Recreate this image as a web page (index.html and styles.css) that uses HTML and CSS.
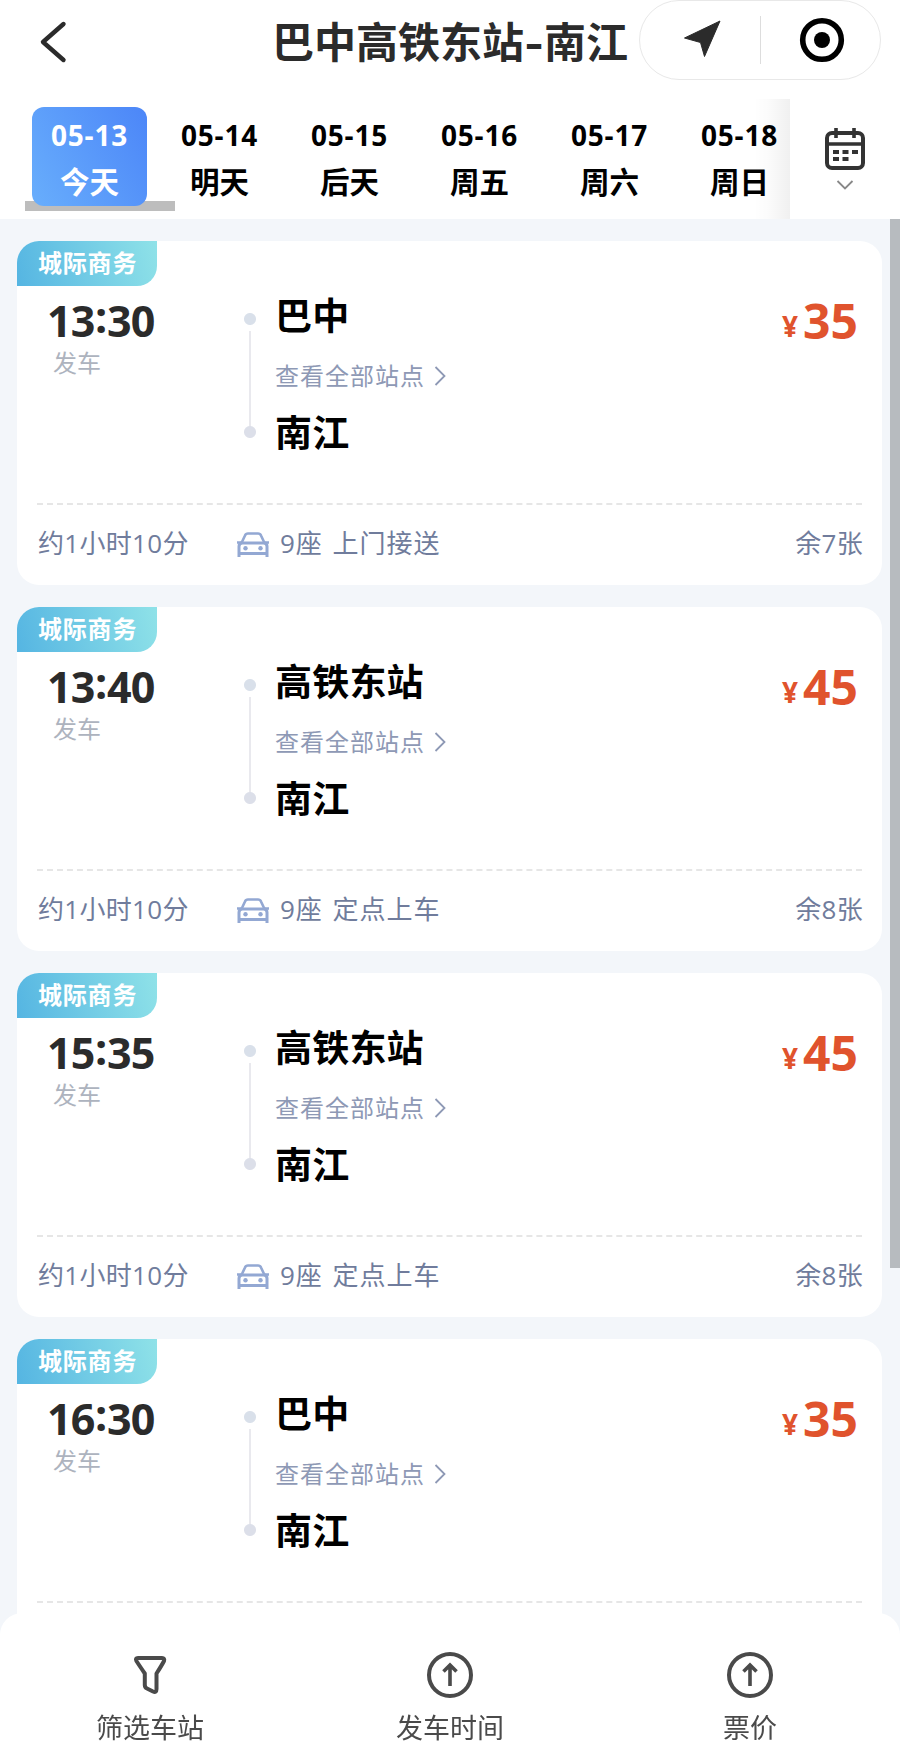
FILE: index.html
```html
<!DOCTYPE html>
<html lang="zh-CN">
<head>
  <meta charset="UTF-8" />
  <meta name="viewport" content="width=device-width, initial-scale=1.0"/>
  <title>巴中高铁东站-南江</title>
  <link rel="stylesheet" href="styles.css">
</head>
<body>

<svg class="sprite">
  <symbol id="icon-car" viewBox="0 0 34 28">
    <path d="M5.5 12 L9 4.5 Q9.8 2.5 12 2.5 H22 Q24.2 2.5 25 4.5 L28.5 12" fill="none" stroke="currentColor" stroke-width="2.6"/>
    <path d="M1 11.5 H5 M29 11.5 H33" stroke="currentColor" stroke-width="2.6"/>
    <path d="M3 26 V15.5 Q3 12 6.5 12 H27.5 Q31 12 31 15.5 V26 M3 22.5 H31" fill="none" stroke="currentColor" stroke-width="3"/>
    <circle cx="9.5" cy="17.3" r="2.2" fill="currentColor"/>
    <circle cx="24.5" cy="17.3" r="2.2" fill="currentColor"/>
  </symbol>
  <symbol id="icon-more" viewBox="0 0 12 22">
    <path d="M1.5 2 L10.5 11 L1.5 20" fill="none" stroke="currentColor" stroke-width="1.8"/>
  </symbol>
  <symbol id="icon-up" viewBox="0 0 48 48">
    <circle cx="24" cy="24" r="21" fill="none" stroke="currentColor" stroke-width="4"/>
    <path d="M24 35 V15 M17.5 20.5 L24 14 L30.5 20.5" fill="none" stroke="currentColor" stroke-width="3.6"/>
  </symbol>
</svg>

<header class="header">
  <svg class="back" viewBox="0 0 30 44">
    <path d="M24.5 4 L4 22 L24.5 40" fill="none" stroke="#2b2b2b" stroke-width="4.4" stroke-linecap="round" stroke-linejoin="round"/>
  </svg>
  <h1 class="title">巴中高铁东站<span class="dash">-</span>南江</h1>
  <div class="capsule">
    <svg class="capsule-icon" viewBox="0 0 48 48">
      <path d="M6.5 22 L42 5 L26.5 40.5 L22.5 26.5 Z" fill="#2b2b2b" stroke="#2b2b2b" stroke-linejoin="round"/>
    </svg>
    <span class="capsule-line"></span>
    <svg class="capsule-icon" viewBox="0 0 48 48">
      <circle cx="24" cy="24" r="19.3" fill="none" stroke="#000" stroke-width="5.6"/>
      <circle cx="24" cy="24" r="8" fill="#000"/>
    </svg>
  </div>
</header>

<nav class="dates">
  <div class="date-list">
    <div class="date active"><span class="day">05-13</span><span>今天</span></div>
    <div class="date"><span class="day">05-14</span><span>明天</span></div>
    <div class="date"><span class="day">05-15</span><span>后天</span></div>
    <div class="date"><span class="day">05-16</span><span>周五</span></div>
    <div class="date"><span class="day">05-17</span><span>周六</span></div>
    <div class="date"><span class="day">05-18</span><span>周日</span></div>
  </div>
  <div class="calendar">
    <svg width="42" height="44" viewBox="0 0 42 44">
      <rect x="3" y="6" width="36" height="35" rx="5" fill="none" stroke="#333" stroke-width="4"/>
      <path d="M3 17 H39" stroke="#333" stroke-width="3.4"/>
      <path d="M12 1 V11 M30 1 V11" stroke="#333" stroke-width="3.6"/>
      <path d="M9 25 H15 M18.5 25 H24.5 M28 25 H34 M9 32 H15 M18.5 32 H24.5" stroke="#333" stroke-width="4"/>
    </svg>
    <svg class="arrow-down" width="18" height="12" viewBox="0 0 18 12">
      <path d="M1.5 2 L9 9.5 L16.5 2" fill="none" stroke="#888" stroke-width="1.8"/>
    </svg>
  </div>
</nav>

<main class="list">
  <section class="card">
    <div class="badge">城际商务</div>
    <div class="trip">
      <div class="depart">
        <div class="time">13<span class="colon">:</span>30</div>
        <div class="sub">发车</div>
      </div>
      <div class="route-line"></div>
      <div class="stations">
        <div class="station">巴中</div>
        <div class="all-stops">查看全部站点<svg><use href="#icon-more"/></svg></div>
        <div class="station">南江</div>
      </div>
      <div class="price"><span class="yen">¥</span>35</div>
    </div>
    <div class="card-foot">
      <span class="duration">约1小时10分</span>
      <svg class="car"><use href="#icon-car"/></svg>
      <span class="seats">9座 上门接送</span>
      <span class="left">余7张</span>
    </div>
  </section>

  <section class="card">
    <div class="badge">城际商务</div>
    <div class="trip">
      <div class="depart">
        <div class="time">13<span class="colon">:</span>40</div>
        <div class="sub">发车</div>
      </div>
      <div class="route-line"></div>
      <div class="stations">
        <div class="station">高铁东站</div>
        <div class="all-stops">查看全部站点<svg><use href="#icon-more"/></svg></div>
        <div class="station">南江</div>
      </div>
      <div class="price"><span class="yen">¥</span>45</div>
    </div>
    <div class="card-foot">
      <span class="duration">约1小时10分</span>
      <svg class="car"><use href="#icon-car"/></svg>
      <span class="seats">9座 定点上车</span>
      <span class="left">余8张</span>
    </div>
  </section>

  <section class="card">
    <div class="badge">城际商务</div>
    <div class="trip">
      <div class="depart">
        <div class="time">15<span class="colon">:</span>35</div>
        <div class="sub">发车</div>
      </div>
      <div class="route-line"></div>
      <div class="stations">
        <div class="station">高铁东站</div>
        <div class="all-stops">查看全部站点<svg><use href="#icon-more"/></svg></div>
        <div class="station">南江</div>
      </div>
      <div class="price"><span class="yen">¥</span>45</div>
    </div>
    <div class="card-foot">
      <span class="duration">约1小时10分</span>
      <svg class="car"><use href="#icon-car"/></svg>
      <span class="seats">9座 定点上车</span>
      <span class="left">余8张</span>
    </div>
  </section>

  <section class="card">
    <div class="badge">城际商务</div>
    <div class="trip">
      <div class="depart">
        <div class="time">16<span class="colon">:</span>30</div>
        <div class="sub">发车</div>
      </div>
      <div class="route-line"></div>
      <div class="stations">
        <div class="station">巴中</div>
        <div class="all-stops">查看全部站点<svg><use href="#icon-more"/></svg></div>
        <div class="station">南江</div>
      </div>
      <div class="price"><span class="yen">¥</span>35</div>
    </div>
    <div class="card-foot"></div>
  </section>
  <div class="scrollbar"></div>
</main>

<footer class="tabs">
  <div class="tab">
    <svg viewBox="0 0 48 48">
      <path d="M12 7 H36 Q39 7 38 10 Q36 14 30.5 22.5 V38 Q30.5 42 27 40.5 L21 37.5 Q18.8 36.5 18.8 34 V22.5 Q13 14 10.4 10 Q9 7 12 7 Z" fill="none" stroke="currentColor" stroke-width="4" stroke-linejoin="round"/>
    </svg>
    <span>筛选车站</span>
  </div>
  <div class="tab">
    <svg><use href="#icon-up"/></svg>
    <span>发车时间</span>
  </div>
  <div class="tab">
    <svg><use href="#icon-up"/></svg>
    <span>票价</span>
  </div>
</footer>

</body>
</html>
```
FILE: styles.css
```css
* {
  box-sizing: border-box;
}

body {
  margin: 0;
  height: 1743px;
  display: flex;
  flex-direction: column;
  overflow: hidden;
  font-family: "Open Sans", "Noto Sans CJK SC", sans-serif;
  background: #fff;
  color: #000;
}

svg {
  display: block;
  flex-shrink: 0;
}

.sprite {
  position: absolute;
  width: 0;
  height: 0;
}

/* header */
.header {
  height: 99px;
  flex-shrink: 0;
  display: flex;
  align-items: flex-start;
  padding-left: 39px;
}

.back {
  width: 30px;
  height: 44px;
  margin-top: 20px;
}

.title {
  margin: 0 0 0 203px;
  width: 367px;
  font-size: 42px;
  line-height: 83px;
  color: #2b2b2b;
  white-space: nowrap;
}

.dash {
  display: inline-block;
  width: 20px;
  text-align: center;
  transform: scaleX(1.3);
}

.capsule {
  width: 242px;
  height: 80px;
  border: 1.5px solid #e8e8e8;
  border-radius: 40px;
  display: flex;
  align-items: center;
  justify-content: space-between;
  padding: 0 34px 0 38px;
}

.capsule-icon {
  width: 48px;
  height: 48px;
}

.capsule-line {
  width: 1.5px;
  height: 48px;
  margin-right: 3px;
  background: #ddd;
}

/* dates */
.dates {
  height: 120px;
  flex-shrink: 0;
  display: flex;
}

.date-list {
  width: 790px;
  position: relative;
  overflow: hidden;
  display: flex;
  gap: 15px;
  padding: 8px 0 0 32px;
}

.date-list::before {
  content: "";
  position: absolute;
  left: 25px;
  top: 102px;
  width: 150px;
  height: 10px;
  background: #bdbdbd;
}

.date-list::after {
  content: "";
  position: absolute;
  right: 0;
  top: 0;
  width: 36px;
  height: 100%;
  background: linear-gradient(to right, rgba(0, 0, 0, 0), rgba(0, 0, 0, 0.015) 40%, rgba(0, 0, 0, 0.06));
}

.date {
  position: relative;
  width: 115px;
  height: 99px;
  flex-shrink: 0;
  padding-top: 5px;
  border-radius: 12px;
  display: flex;
  flex-direction: column;
  align-items: center;
  font-size: 29.5px;
  font-weight: bold;
  line-height: 47px;
}

.day {
  font-size: 28px;
  line-height: 46px;
  letter-spacing: 0.8px;
}

.date.active {
  color: #fff;
  background: linear-gradient(60deg, #68aefc, #4c86f8);
}

.calendar {
  width: 110px;
  padding-top: 28px;
  display: flex;
  flex-direction: column;
  align-items: center;
}

.arrow-down {
  margin-top: 8px;
}

/* trips */
.list {
  position: relative;
  flex: 1;
  padding: 22px 18px 0 17px;
  background: #f3f6fa;
  overflow: hidden;
}

.card {
  height: 344px;
  margin-bottom: 22px;
  border-radius: 22px;
  background: #fff;
  overflow: hidden;
}

.badge {
  width: 140px;
  height: 45px;
  line-height: 44px;
  padding-left: 21px;
  border-bottom-right-radius: 20px;
  background: linear-gradient(75deg, #55b5e2, #8fe2e8);
  color: #fff;
  font-size: 24px;
  font-weight: bold;
  letter-spacing: 0.8px;
}

.trip {
  height: 219px;
  margin: 0 20px;
  border-bottom: 2px dashed #e6e6e6;
  display: flex;
}

.depart {
  width: 207px;
  padding: 10px 0 0 10px;
}

.time {
  font-size: 43px;
  font-weight: bold;
  line-height: 50px;
  letter-spacing: -0.8px;
  color: #2b2b2b;
}

.colon {
  position: relative;
  top: -4px;
  margin: 0 0.5px;
}

.sub {
  padding: 1px 0 0 6px;
  font-size: 24px;
  line-height: 32px;
  color: #adb3be;
}

.route-line {
  width: 12px;
  height: 125px;
  margin-top: 27px;
  background:
    radial-gradient(circle at 6px 6px, #d9e0ea 5.5px, transparent 6.5px),
    radial-gradient(circle at 6px 119px, #dcdfe9 5.5px, transparent 6.5px),
    linear-gradient(#e9e9ee, #e9e9ee) 5px 18px / 2px 96px no-repeat;
}

.stations {
  flex: 1;
  padding: 5px 0 0 19px;
}

.station {
  font-size: 37px;
  font-weight: bold;
  line-height: 50px;
  letter-spacing: 0.2px;
}

.all-stops {
  height: 67px;
  display: flex;
  align-items: center;
  font-size: 24px;
  letter-spacing: 1px;
  color: #8e99b5;
}

.all-stops svg {
  width: 12px;
  height: 22px;
  margin: 3px 0 0 9px;
}

.price {
  padding: 10px 4px 0 0;
  font-size: 48px;
  font-weight: bold;
  line-height: 50px;
  color: #e0532d;
}

.yen {
  position: relative;
  top: -2px;
  margin-right: 5px;
  font-size: 28px;
}

.card-foot {
  height: 80px;
  padding: 0 19px 6px 21px;
  display: flex;
  align-items: center;
  font-size: 26px;
  letter-spacing: 0.3px;
  color: #707c9c;
}

.duration {
  width: 198px;
}

.car {
  width: 34px;
  height: 28px;
  margin: 5px 10px 0 0;
  color: #93a8d3;
}

.seats {
  letter-spacing: 1px;
  word-spacing: 2px;
}

.left {
  margin-left: auto;
}

.scrollbar {
  position: absolute;
  right: 0;
  top: 0;
  width: 10px;
  height: 1049px;
  background: #b7bbbf;
}

/* bottom bar */
.tabs {
  position: fixed;
  left: 0;
  right: 0;
  bottom: 0;
  height: 130px;
  padding-top: 38px;
  display: flex;
  background: #fff;
  border-radius: 22px 22px 0 0;
}

.tab {
  flex: 1;
  display: flex;
  flex-direction: column;
  align-items: center;
  font-size: 27px;
  line-height: 40px;
  color: #4a4a4a;
}

.tab svg {
  width: 48px;
  height: 48px;
  margin-bottom: 9px;
}
```
